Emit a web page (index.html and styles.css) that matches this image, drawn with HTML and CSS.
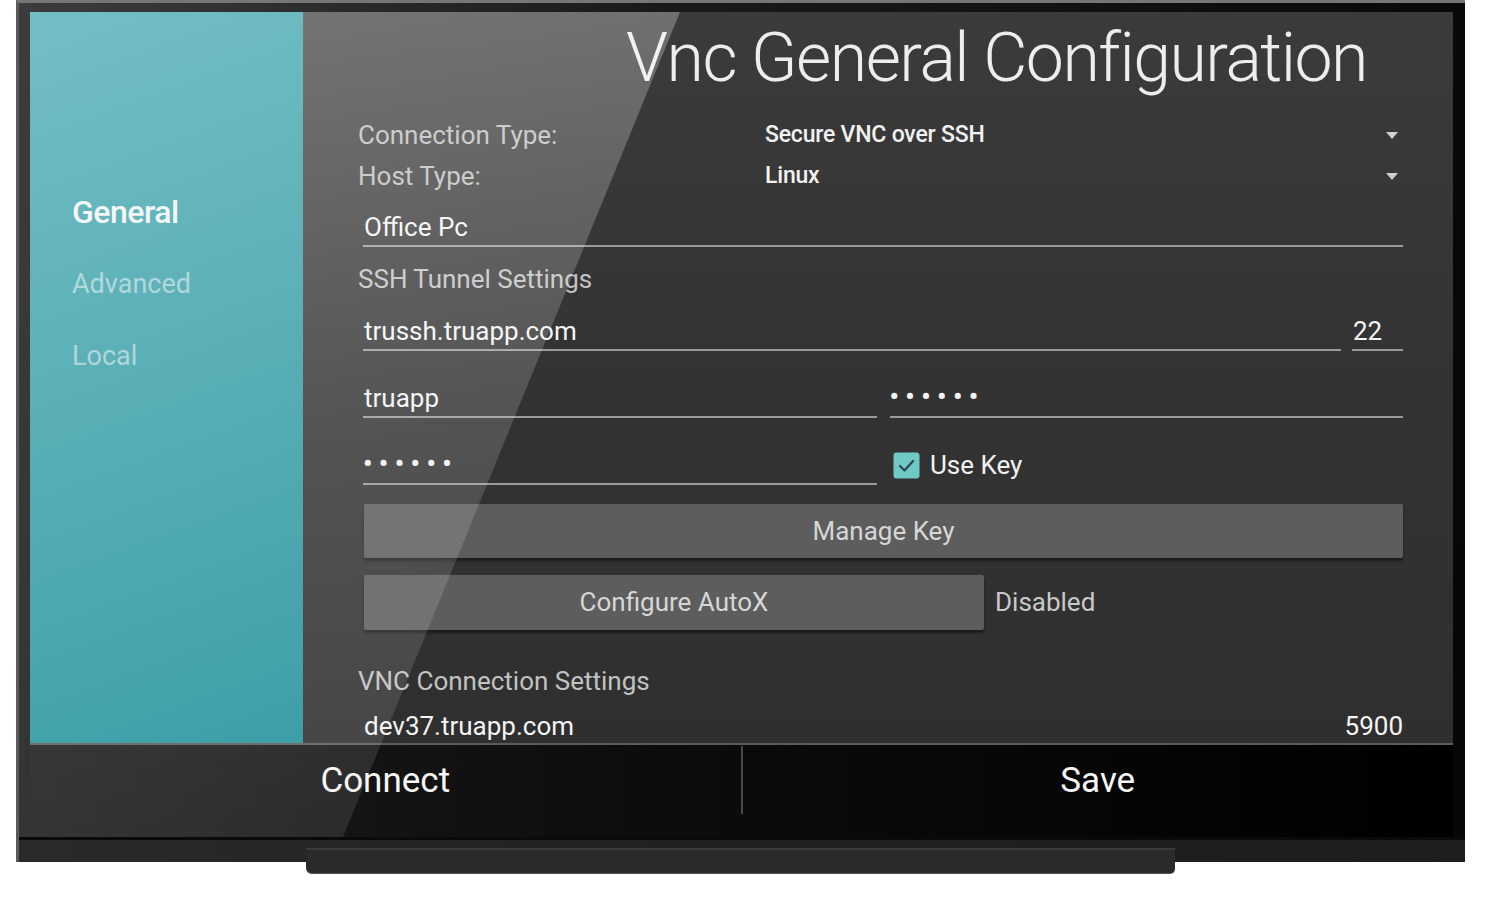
FILE: index.html
```html
<!DOCTYPE html>
<html>
<head>
<meta charset="utf-8">
<title>Vnc General Configuration</title>
<link rel="stylesheet" href="styles.css">
</head>
<body>
<div class="tv">
  <div class="screen">
    <div class="main">
      <nav class="sidebar">
        <div class="nav-item active">General</div>
        <div class="nav-item">Advanced</div>
        <div class="nav-item">Local</div>
      </nav>
      <section class="panel">
        <h1 class="title">Vnc General Configuration</h1>
        <div class="spinner-row first">
          <span class="s-label">Connection Type:</span>
          <span class="s-value">Secure VNC over SSH</span>
          <span class="arrow"></span>
        </div>
        <div class="spinner-row">
          <span class="s-label">Host Type:</span>
          <span class="s-value">Linux</span>
          <span class="arrow"></span>
        </div>
        <div class="field f-name">Office Pc</div>
        <div class="section-label l-ssh">SSH Tunnel Settings</div>
        <div class="pair r-host">
          <div class="field grow">trussh.truapp.com</div>
          <div class="field port">22</div>
        </div>
        <div class="pair r-user">
          <div class="field half">truapp</div>
          <div class="field half dots">••••••</div>
        </div>
        <div class="pair r-key">
          <div class="field half dots">••••••</div>
          <label class="check">
            <svg class="box" width="27" height="27" viewBox="0 0 27 27"><rect x="0.5" y="0.5" width="26" height="26" rx="3" fill="#6fc9c5"/><polyline points="7,14 11.5,18.5 20,9" fill="none" stroke="#2d4b52" stroke-width="2.4" stroke-linecap="round" stroke-linejoin="round"/></svg>
            <span>Use Key</span>
          </label>
        </div>
        <div class="btn wide">Manage Key</div>
        <div class="btn-row">
          <div class="btn autox">Configure AutoX</div>
          <span class="status">Disabled</span>
        </div>
        <div class="section-label l-vnc">VNC Connection Settings</div>
        <div class="pair r-vnc">
          <div class="field grow vnc">dev37.truapp.com</div>
          <div class="field port right vnc">5900</div>
        </div>
      </section>
    </div>
    <div class="bar">
      <div class="bar-btn">Connect</div>
      <div class="divider"></div>
      <div class="bar-btn">Save</div>
    </div>
    <div class="glare"></div>
  </div>
  <div class="chin"></div>
</div>
<div class="stand"></div>
</body>
</html>
```

FILE: styles.css
```css
* { box-sizing: border-box; }
html, body { margin: 0; padding: 0; background: #ffffff; }
body { font-family: Roboto, "Liberation Sans", Arial, sans-serif; width: 1486px; height: 900px; overflow: hidden; }

.tv {
  width: 1449px;
  height: 862px;
  margin-left: 16px;
  padding: 9px 12px 0 11px;
  border-top: 3px solid #767676;
  border-left: 3px solid #5a5a5a;
  background: linear-gradient(100deg, #3c3c3c 0%, #1a1a1a 40%, #060606 100%);
}

.screen {
  position: relative;
  width: 1423px;
  height: 825px;
  overflow: hidden;
  display: flex;
  flex-direction: column;
}

.main { display: flex; height: 731px; }

.sidebar {
  position: relative;
  z-index: 2;
  width: 273px;
  flex: none;
  padding-top: 164px;
  padding-left: 42px;
  background: linear-gradient(160deg, #72bec4 0%, #5cb0b7 45%, #3d9ea7 100%);
}
.nav-item {
  height: 72px;
  line-height: 72px;
  font-size: 27px;
  color: rgba(255,255,255,0.5);
}
.nav-item.active {
  font-size: 32px;
  font-weight: 500;
  color: #f4f7f7;
  letter-spacing: -0.5px;
}

.panel {
  flex: 1;
  padding: 0 50px 0 55px;
  background: linear-gradient(180deg, #3b3b3b 0%, #333333 50%, #2f2f2f 100%);
  overflow: hidden;
}

.title {
  margin: 0;
  height: 92px;
  line-height: 92px;
  font-size: 68px;
  font-weight: 300;
  color: #ededed;
  text-align: right;
  padding-right: 36px;
  letter-spacing: -1.5px;
  white-space: nowrap;
}

.spinner-row {
  display: flex;
  align-items: center;
  height: 41px;
}
.spinner-row.first { margin-top: 10px; }
.s-label {
  width: 407px;
  font-size: 26px;
  color: #bdbdbd;
}
.s-value {
  flex: 1;
  font-size: 23px;
  font-weight: 500;
  color: #f2f2f2;
  letter-spacing: -0.2px;
}
.arrow {
  width: 0; height: 0;
  border-left: 6px solid transparent;
  border-right: 6px solid transparent;
  border-top: 7px solid #d0d0d0;
  margin-right: 5px;
  margin-top: 1px;
}

.field {
  height: 38px;
  line-height: 36px;
  font-size: 26px;
  color: #f4f4f4;
  padding-left: 1px;
  border-bottom: 2px solid #9a9a9a;
  margin-left: 5px;
  white-space: nowrap;
}
.f-name { margin-top: 13px; }

.section-label {
  height: 36px;
  line-height: 36px;
  font-size: 26px;
  color: #c2c2c2;
}
.l-ssh { margin-top: 14px; }
.l-vnc { margin-top: 33px; }

.pair { display: flex; margin-left: 5px; }
.pair .field { margin-left: 0; }
.r-host { margin-top: 16px; gap: 11px; }
.r-user { margin-top: 29px; gap: 13px; }
.r-key { margin-top: 29px; gap: 13px; align-items: flex-start; }
.r-vnc { margin-top: 14px; gap: 11px; }
.grow { flex: 1; }
.port { width: 51px; }
.port.right { text-align: right; width: 80px; }
.field.vnc { height: 26px; line-height: 26px; border-bottom: none; }
.half { width: 514px; }
.dots { font-size: 26px; font-weight: 700; letter-spacing: 6.5px; padding-left: 0; line-height: 32px; }

.check {
  display: flex;
  align-items: center;
  gap: 10px;
  height: 36px;
  margin-left: 3px;
  font-size: 26px;
  color: #f2f2f2;
}
.check .box { display: block; }

.btn {
  height: 54px;
  line-height: 54px;
  text-align: center;
  font-size: 26px;
  color: #d6d6d6;
  background: #5d5d5d;
  border-radius: 2px;
  box-shadow: 0 3px 3px rgba(0,0,0,0.45);
}
.btn.wide { margin: 19px 0 0 6px; }
.btn-row { display: flex; align-items: center; margin-top: 17px; margin-left: 6px; }
.btn.autox { width: 620px; height: 55px; line-height: 55px; }
.status { margin-left: 11px; font-size: 26px; color: #c8c8c8; margin-top: -2px; }

.bar {
  position: relative;
  display: flex;
  height: 94px;
  border-top: 2px solid #5c5c5c;
  background: linear-gradient(90deg, #1c1c1c 0%, #0c0c0c 45%, #000000 100%);
}
.bar-btn {
  flex: 1;
  height: 72px;
  line-height: 72px;
  text-align: center;
  font-size: 35px;
  color: #f6f6f6;
}
.divider {
  width: 2px;
  height: 68px;
  margin-top: 1px;
  background: #4a4a4a;
}

.glare {
  position: absolute;
  left: 0; top: 0;
  width: 100%; height: 100%;
  z-index: 1;
  pointer-events: none;
  clip-path: polygon(0 0, 650px 0, 313px 825px, 0 825px);
  background: linear-gradient(170deg, rgba(255,255,255,0.30) 0%, rgba(255,255,255,0.16) 45%, rgba(255,255,255,0.1) 80%, rgba(255,255,255,0.05) 100%);
}

.chin {
  height: 25px;
  margin: 0 -12px 0 -11px;
  border-top: 3px solid #0a0a0a;
  background: linear-gradient(90deg, #2a2a2a 0%, #202020 50%, #1e1e1e 100%);
}

.stand {
  width: 869px;
  height: 26px;
  margin-left: 306px;
  margin-top: -14px;
  border-top: 2px solid #3a3a3a;
  border-bottom: 1px solid #555;
  border-radius: 0 0 5px 6px;
  background: #2a2a2a;
}
```
